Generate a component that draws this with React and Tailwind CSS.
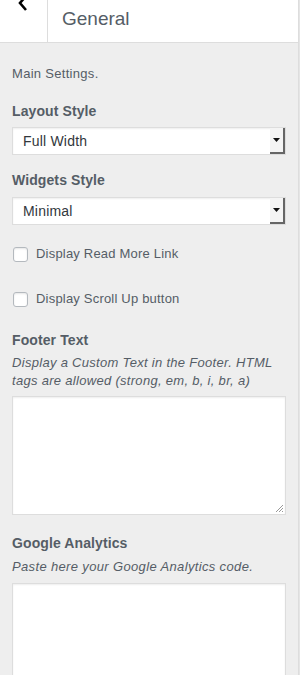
import React from 'react';

const Select = ({ value }) => (
  <div className="relative flex h-[28px] w-full items-center border border-[#ddd] bg-white shadow-[inset_0_1px_2px_rgba(0,0,0,0.07)]">
    <span className="pl-[10px] text-[14px] tracking-[0.2px] text-[#32373c]">{value}</span>
    <div className="absolute right-0 top-0 flex h-[26px] w-[15px] items-center justify-center border-b-2 border-r-2 border-[#666] bg-[#f4f4f4]">
      <svg width="7" height="5" viewBox="0 0 7 5">
        <path d="M0 0h7L3.5 4z" fill="#111" />
      </svg>
    </div>
  </div>
);

const Checkbox = ({ label, className }) => (
  <label className={`flex h-[20px] items-center ${className}`}>
    <span className="ml-[1px] h-[15px] w-[15px] rounded-[3px] border border-[#b4b9be] bg-white shadow-[inset_0_1px_2px_rgba(0,0,0,0.1)]" />
    <span className="ml-[8px] text-[13px] tracking-[0.2px] text-[#555d66]">{label}</span>
  </label>
);

const App = () => {
  return (
    <div className="flex h-[675px] w-[300px] overflow-hidden bg-[#e5e5e5] font-['Liberation_Sans',Arial,sans-serif]">
      <div className="h-full w-[299px] border-r border-[#ddd] bg-[#eee]">
        <div className="flex h-[43px] border-b border-[#ddd] bg-white">
          <div className="relative w-[48px] border-r border-[#ddd]">
            <svg className="absolute left-[17px] top-[-6px]" width="12" height="18" viewBox="0 0 12 18">
              <path d="M9 2L3 9l6 7" fill="none" stroke="#000" strokeWidth="2.6" />
            </svg>
          </div>
          <div className="flex items-center pl-[14px] pb-[4px] text-[19px] text-[#555d66]">General</div>
        </div>

        <div className="px-3">
          <p className="mt-[22px] text-[13px] leading-[18px] tracking-[0.3px] text-[#555d66]">Main Settings.</p>

          <h3 className="mt-[18px] text-[14px] font-bold leading-[20px] tracking-[0.1px] text-[#555d66]">Layout Style</h3>
          <div className="mt-[6px]">
            <Select value="Full Width" />
          </div>

          <h3 className="mt-[15px] text-[14px] font-bold leading-[20px] tracking-[0.1px] text-[#555d66]">Widgets Style</h3>
          <div className="mt-[7px]">
            <Select value="Minimal" />
          </div>

          <Checkbox className="mt-[19px]" label="Display Read More Link" />
          <Checkbox className="mt-[25px]" label="Display Scroll Up button" />

          <h3 className="mt-[21px] text-[14px] font-bold leading-[20px] tracking-[0.1px] text-[#555d66]">Footer Text</h3>
          <p className="mt-[4px] text-[13px] italic leading-[18px] tracking-[0.3px] text-[#555d66]">
            Display a Custom Text in the Footer. HTML tags are allowed (strong, em, b, i, br, a)
          </p>
          <div className="relative mt-[6px] h-[119px] w-full border border-[#ddd] bg-white shadow-[inset_0_1px_2px_rgba(0,0,0,0.07)]">
            <svg className="absolute bottom-[1px] right-[1px]" width="10" height="10" viewBox="0 0 10 10">
              <path d="M9 2L2 9M9 5L5 9M9 8L8 9" stroke="#999" strokeWidth="1" />
            </svg>
          </div>

          <h3 className="mt-[18px] text-[14px] font-bold leading-[20px] tracking-[0.1px] text-[#555d66]">Google Analytics</h3>
          <p className="mt-[5px] text-[13px] italic leading-[18px] tracking-[0.35px] text-[#555d66]">
            Paste here your Google Analytics code.
          </p>
          <div className="mt-[7px] h-[119px] w-full border border-[#ddd] bg-white shadow-[inset_0_1px_2px_rgba(0,0,0,0.07)]" />
        </div>
      </div>
    </div>
  );
};

export default App;
